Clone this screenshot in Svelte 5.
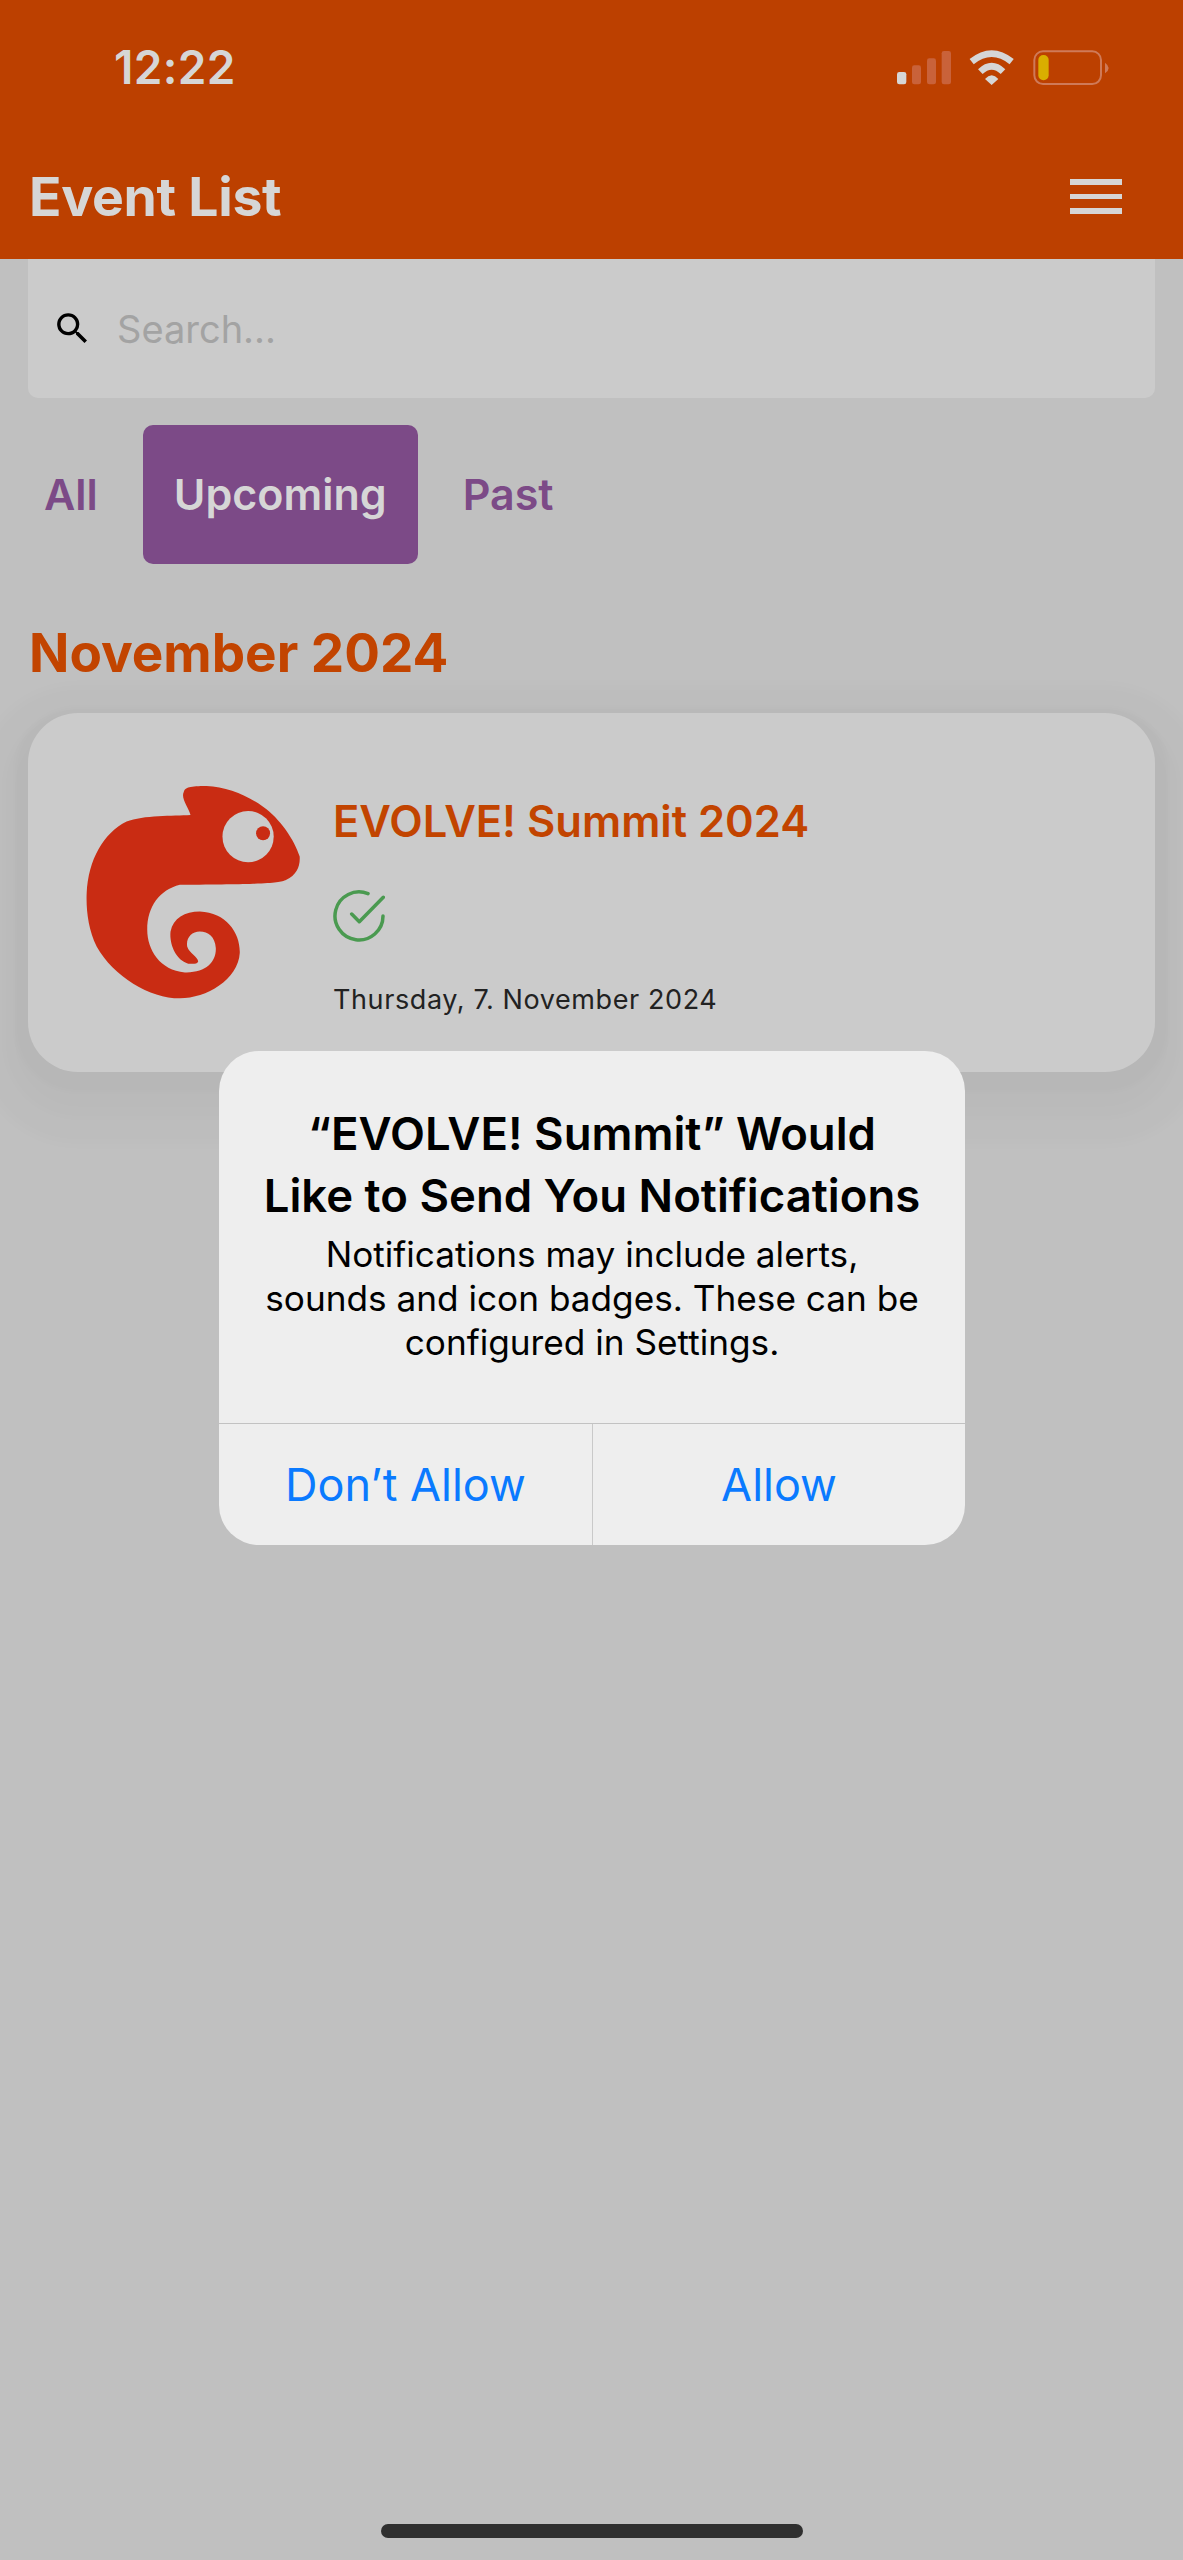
<script>
	const tabs = ['All', 'Upcoming', 'Past'];
	let active = $state('Upcoming');
</script>

<div class="page">
	<header class="top">
		<div class="status">
			<span class="time">12:22</span>
			<svg class="status-icons" viewBox="0 0 840 210" aria-hidden="true">
				<rect x="108" y="123" width="28" height="37" rx="7" fill="#d6d6d6" />
				<rect x="153" y="103" width="27" height="57" rx="7" fill="#c9623a" />
				<rect x="198" y="82" width="27" height="78" rx="7" fill="#c9623a" />
				<rect x="242" y="60" width="28" height="100" rx="7" fill="#c9623a" />
				<path d="M332 92Q392 44 452 92" fill="none" stroke="#d6d6d6" stroke-width="20" />
				<path d="M358 122Q392 90 426 122" fill="none" stroke="#d6d6d6" stroke-width="20" />
				<path d="M372 144Q392 122 412 144L392 162Z" fill="#d6d6d6" />
				<rect x="520" y="61" width="200" height="98" rx="26" fill="none" stroke="#cf7a58" stroke-width="6" />
				<rect x="532" y="72" width="31" height="76" rx="15" fill="#d9ae00" />
				<path d="M732 95Q743 103 743 111Q743 119 732 127Z" fill="#cf7a58" />
			</svg>
		</div>
		<div class="bar">
			<h1>Event List</h1>
			<button class="menu" aria-label="Menu"><i></i><i></i><i></i></button>
		</div>
	</header>

	<main class="content">
		<div class="search">
			<svg class="glass" viewBox="0 0 24 24" aria-hidden="true">
				<path d="M15.5 14h-.79l-.28-.27A6.471 6.471 0 0 0 16 9.5 6.5 6.5 0 1 0 9.5 16c1.61 0 3.09-.59 4.23-1.57l.27.28v.79l5 4.99L20.49 19l-4.99-5zm-6 0C7.01 14 5 11.99 5 9.5S7.01 5 9.5 5 14 7.01 14 9.5 11.99 14 9.5 14z" />
			</svg>
			<span class="placeholder">Search...</span>
		</div>

		<nav class="tabs">
			{#each tabs as tab}
				<button class="tab" class:active={active === tab} onclick={() => (active = tab)}>{tab}</button>
			{/each}
		</nav>

		<h2>November 2024</h2>

		<article class="card">
			<svg class="logo" viewBox="60 60 700 670" aria-hidden="true">
				<path
					fill="#c92c13"
					d="M372 95C376 82 390 78 440 78C500 80 560 105 610 140C660 175 705 240 720 290C722 320 710 345 680 360C655 372 620 372 360 375C300 390 262 440 262 510C262 570 300 632 375 638C440 640 470 605 468 565C466 530 445 515 420 515C395 515 378 535 382 560C388 580 415 592 415 605C412 615 395 612 385 612C345 600 328 550 332 515C340 475 375 455 420 455C500 458 542 520 540 580C535 660 440 716 360 716C270 716 160 650 110 560C85 510 78 450 80 400C85 300 130 220 200 185C250 165 340 168 392 165C385 140 362 115 372 95Z"
				/>
				<circle cx="565" cy="230" r="77" fill="#cbcbcb" />
				<circle cx="610" cy="220" r="21" fill="#c92c13" />
			</svg>
			<div class="info">
				<h3>EVOLVE! Summit 2024</h3>
				<svg class="check" viewBox="0 0 52 52" aria-hidden="true">
					<path d="M50 26A24 24 0 1 1 35 3.7" />
					<path d="M18.7 24L26.3 31.7L50.3 7.3" />
				</svg>
				<p class="date">Thursday, 7. November 2024</p>
			</div>
		</article>
	</main>

	<div class="alert" role="alertdialog">
		<div class="alert-text">
			<h4>“EVOLVE! Summit” Would<br />Like to Send You Notifications</h4>
			<p>Notifications may include alerts,<br />sounds and icon badges. These can be<br />configured in Settings.</p>
		</div>
		<div class="alert-actions">
			<button>Don’t Allow</button>
			<button>Allow</button>
		</div>
	</div>

	<div class="home"></div>
</div>

<style>
	:global(body) {
		margin: 0;
		background: #c0c0c0;
	}
	.page {
		position: relative;
		width: 1183px;
		height: 2560px;
		overflow: hidden;
		background: #c0c0c0;
		font-family: Inter, "Liberation Sans", sans-serif;
	}
	button {
		font-family: inherit;
		background: none;
		border: 0;
		padding: 0;
	}

	.top {
		position: relative;
		z-index: 1;
		height: 259px;
		background: #bc4000;
		color: #d6d6d6;
	}
	.status {
		height: 134px;
		display: flex;
		align-items: center;
		justify-content: space-between;
		padding-left: 114px;
		padding-right: 42px;
	}
	.time {
		font-size: 46px;
		font-weight: 600;
		letter-spacing: 0.3px;
	}
	.status-icons {
		width: 280px;
		height: 70px;
		margin-top: -2px;
	}
	.bar {
		height: 125px;
		display: flex;
		align-items: center;
		justify-content: space-between;
		padding: 0 61px 0 29px;
	}
	h1 {
		margin: 0;
		font-size: 53.5px;
		font-weight: 700;
		letter-spacing: -0.3px;
	}
	.menu {
		display: flex;
		flex-direction: column;
		gap: 9px;
		width: 52px;
	}
	.menu i {
		display: block;
		height: 5.5px;
		background: #d6d6d6;
	}

	.content {
		padding: 0 28px;
	}
	.search {
		height: 139px;
		display: flex;
		align-items: center;
		gap: 24px;
		padding-left: 24px;
		background: #cbcbcb;
		border-radius: 0 0 10px 10px;
	}
	.glass {
		width: 41px;
		height: 41px;
		fill: #000;
	}
	.placeholder {
		font-size: 38px;
		color: #a3a3a3;
	}

	.tabs {
		display: flex;
		gap: 14px;
		margin: 27px 0 0 -15px;
	}
	.tab {
		height: 139px;
		padding: 0 31px 2px;
		border-radius: 10px;
		font-size: 43px;
		font-weight: 600;
		color: #7c4a87;
	}
	.tab.active {
		background: #7c4a87;
		color: #d6d6d6;
	}

	h2 {
		margin: 20px 0 0 1px;
		height: 129px;
		line-height: 138px;
		font-size: 53px;
		font-weight: 700;
		color: #c24400;
	}

	.card {
		height: 359px;
		display: flex;
		align-items: flex-start;
		gap: 20px;
		padding: 67px 0 0 52px;
		box-sizing: border-box;
		background: #cbcbcb;
		border-radius: 50px;
		box-shadow:
			0 7px 6px 13px rgba(0, 0, 0, 0.016),
			0 22px 10px 24px rgba(0, 0, 0, 0.012),
			0 22px 14px 50px rgba(0, 0, 0, 0.014);
	}
	.logo {
		width: 233px;
		height: 223px;
		flex: none;
	}
	.info {
		display: flex;
		flex-direction: column;
		align-items: flex-start;
	}
	h3 {
		margin: 15px 0 0;
		font-size: 43.5px;
		line-height: 52px;
		font-weight: 600;
		color: #c24400;
	}
	.check {
		width: 52px;
		height: 52px;
		margin-top: 43px;
		fill: none;
		stroke: #4a9a50;
		stroke-width: 3.5;
		stroke-linecap: round;
		stroke-linejoin: round;
	}
	.date {
		margin: 41px 0 0;
		font-size: 27px;
		line-height: 34px;
		letter-spacing: 0.6px;
		color: #222;
	}

	.alert {
		position: absolute;
		left: 219px;
		top: 1051px;
		width: 746px;
		height: 494px;
		display: flex;
		flex-direction: column;
		background: #eeeeee;
		border-radius: 40px;
		text-align: center;
		color: #000;
		overflow: hidden;
	}
	.alert-text {
		flex: 1;
		padding-top: 52px;
	}
	h4 {
		margin: 0;
		font-size: 45.5px;
		line-height: 62px;
		font-weight: 600;
	}
	.alert p {
		margin: 5px 0 0;
		font-size: 35.2px;
		line-height: 44px;
	}
	.alert-actions {
		height: 121px;
		display: grid;
		grid-template-columns: 374px 1fr;
		border-top: 1px solid #c2c2c2;
	}
	.alert-actions button {
		font-size: 45px;
		color: #0a7aff;
	}
	.alert-actions button:first-child {
		border-right: 1px solid #c9c9c9;
	}

	.home {
		position: absolute;
		left: 381px;
		top: 2524px;
		width: 422px;
		height: 14px;
		border-radius: 7px;
		background: #2f2f2f;
	}
</style>
